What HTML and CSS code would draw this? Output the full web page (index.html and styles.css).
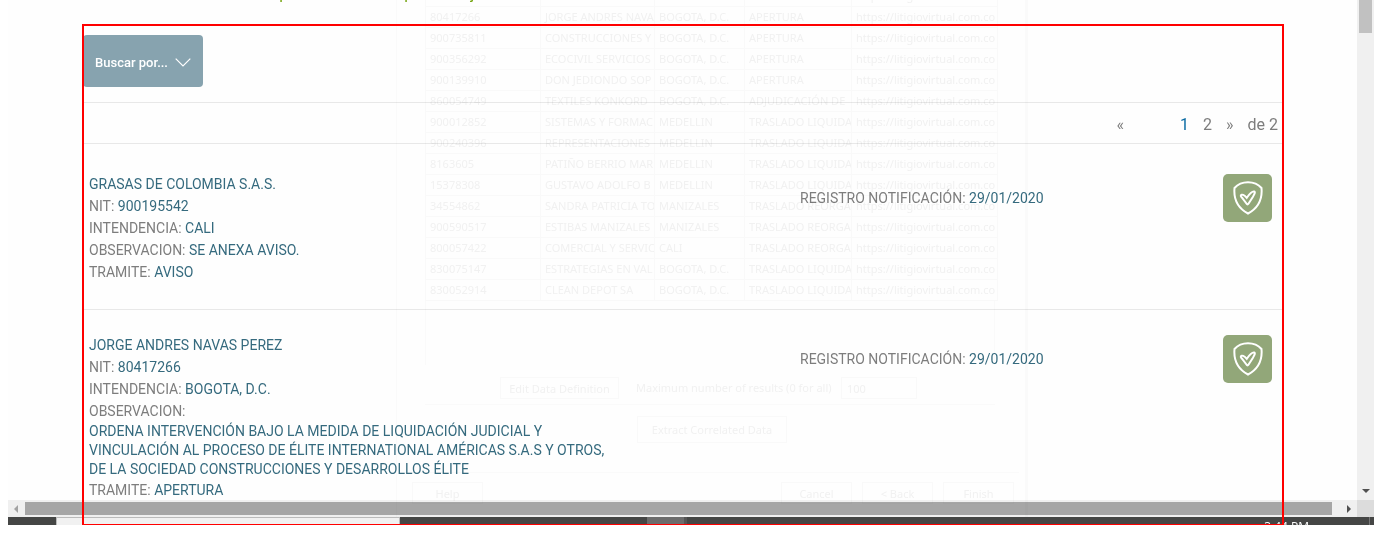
FILE: index.html
```
<!DOCTYPE html>
<html lang="es">
<head>
<meta charset="utf-8">
<title>Litigio Virtual</title>
<link rel="stylesheet" href="styles.css">
</head>
<body>
<div class="screen">
  <div class="view">
    <main class="page">
      <h1 class="heading">Consulte los procesos activos por cada juez</h1>
      <section class="results">
        <div class="search"><button class="search-btn" type="button">Buscar por...
          <svg width="16" height="9" viewBox="0 0 16 9"><path d="M.7.7 8 8 15.3.7" fill="none" stroke="#fff" stroke-width="1.2"/></svg></button></div>
        <nav class="pager"><a class="prev" href="#">«</a><a class="current" href="#">1</a><a href="#">2</a><a class="next" href="#">»</a><span>de 2</span></nav>
        <article class="item">
          <div class="info">
            <p><b>GRASAS DE COLOMBIA S.A.S.</b></p>
            <p>NIT: <b>900195542</b></p>
            <p>INTENDENCIA: <b>CALI</b></p>
            <p>OBSERVACION: <b>SE ANEXA AVISO.</b></p>
            <p>TRAMITE: <b>AVISO</b></p>
          </div>
          <p class="date">REGISTRO NOTIFICACIÓN: <b>29/01/2020</b></p>
          <button class="shield" type="button" aria-label="Verificar"><svg width="30" height="34" viewBox="0 0 30 34"><path d="M15 1.2C11 1.2 5 3 1.5 7C.5 18 5 27 15 32.5C25 27 29.5 18 28.5 7C25 3 19 1.2 15 1.2Z"/><path d="M7.8 14.6C8.5 12.6 11.5 14 13.8 16.8C16 13.5 19 10 21.2 10.500C22.700 11 21.200 13.500 19.800 16L15.600 22.500C14.800 23.800 14.200 23.800 13.400 22.500L8.800 16.500C8.200 15.800 7.600 15.200 7.800 14.600Z"/></svg></button>
        </article>
        <article class="item">
          <div class="info">
            <p><b>JORGE ANDRES NAVAS PEREZ</b></p>
            <p>NIT: <b>80417266</b></p>
            <p>INTENDENCIA: <b>BOGOTA, D.C.</b></p>
            <p>OBSERVACION:</p>
            <p class="long"><b>ORDENA INTERVENCIÓN BAJO LA MEDIDA DE LIQUIDACIÓN JUDICIAL Y<br>VINCULACIÓN AL PROCESO DE ÉLITE INTERNATIONAL AMÉRICAS S.A.S Y OTROS,<br>DE LA SOCIEDAD CONSTRUCCIONES Y DESARROLLOS ÉLITE</b></p>
            <p>TRAMITE: <b>APERTURA</b></p>
          </div>
          <p class="date">REGISTRO NOTIFICACIÓN: <b>29/01/2020</b></p>
          <button class="shield" type="button" aria-label="Verificar"><svg width="30" height="34" viewBox="0 0 30 34"><path d="M15 1.2C11 1.2 5 3 1.5 7C.5 18 5 27 15 32.5C25 27 29.5 18 28.5 7C25 3 19 1.2 15 1.2Z"/><path d="M7.8 14.6C8.5 12.6 11.5 14 13.8 16.8C16 13.5 19 10 21.2 10.500C22.700 11 21.200 13.500 19.800 16L15.600 22.500C14.800 23.800 14.200 23.800 13.400 22.500L8.800 16.500C8.200 15.800 7.600 15.200 7.800 14.600Z"/></svg></button>
        </article>
      </section>
    </main>
    <div class="vbar"><div class="vthumb"></div><svg width="8" height="4" viewBox="0 0 8 4"><path d="M0 0H8L4 4Z" fill="#505050"/></svg></div>
  </div>
  <div class="hbar"><svg width="4" height="8" viewBox="0 0 4 8"><path d="M4 0V8L0 4Z" fill="#a3a3a3"/></svg><div class="hthumb"></div><svg width="4" height="8" viewBox="0 0 4 8"><path d="M0 0V8L4 4Z" fill="#505050"/></svg><div class="corner"></div></div>
  <div class="taskbar"><div class="start"></div><div class="searchbox"></div><div class="apps"></div><div class="active"></div><div class="clock">3:44 PM</div><div class="peek"></div></div>

  <div class="ghost">
    <table>
      <colgroup><col class="c1"><col class="c2"><col class="c3"><col class="c4"><col class="c5"></colgroup>
      <tr><td>900195542</td><td>GRASAS DE COLOMBIA</td><td>CALI</td><td>AVISO</td><td>https://litigiovirtual.com.co</td></tr>
      <tr><td>80417266</td><td>JORGE ANDRES NAVAS</td><td>BOGOTA, D.C.</td><td>APERTURA</td><td>https://litigiovirtual.com.co</td></tr>
      <tr><td>900735811</td><td>CONSTRUCCIONES Y</td><td>BOGOTA, D.C.</td><td>APERTURA</td><td>https://litigiovirtual.com.co</td></tr>
      <tr><td>900356292</td><td>ECOCIVIL SERVICIOS</td><td>BOGOTA, D.C.</td><td>APERTURA</td><td>https://litigiovirtual.com.co</td></tr>
      <tr><td>900139910</td><td>DON JEDIONDO SOP</td><td>BOGOTA, D.C.</td><td>APERTURA</td><td>https://litigiovirtual.com.co</td></tr>
      <tr><td>860054749</td><td>TEXTILES KONKORD</td><td>BOGOTA, D.C.</td><td>ADJUDICACIÓN DE</td><td>https://litigiovirtual.com.co</td></tr>
      <tr><td>900012852</td><td>SISTEMAS Y FORMAC</td><td>MEDELLIN</td><td>TRASLADO LIQUIDA</td><td>https://litigiovirtual.com.co</td></tr>
      <tr><td>900240396</td><td>REPRESENTACIONES</td><td>MEDELLIN</td><td>TRASLADO LIQUIDA</td><td>https://litigiovirtual.com.co</td></tr>
      <tr><td>8163605</td><td>PATIÑO BERRIO MAR</td><td>MEDELLIN</td><td>TRASLADO LIQUIDA</td><td>https://litigiovirtual.com.co</td></tr>
      <tr><td>15378308</td><td>GUSTAVO ADOLFO B</td><td>MEDELLIN</td><td>TRASLADO LIQUIDA</td><td>https://litigiovirtual.com.co</td></tr>
      <tr><td>34554862</td><td>SANDRA PATRICIA TO</td><td>MANIZALES</td><td>TRASLADO REORGA</td><td>https://litigiovirtual.com.co</td></tr>
      <tr><td>900590517</td><td>ESTIBAS MANIZALES</td><td>MANIZALES</td><td>TRASLADO REORGA</td><td>https://litigiovirtual.com.co</td></tr>
      <tr><td>800057422</td><td>COMERCIAL Y SERVIC</td><td>CALI</td><td>TRASLADO REORGA</td><td>https://litigiovirtual.com.co</td></tr>
      <tr><td>830075147</td><td>ESTRATEGIAS EN VAL</td><td>BOGOTA, D.C.</td><td>TRASLADO LIQUIDA</td><td>https://litigiovirtual.com.co</td></tr>
      <tr><td>830052914</td><td>CLEAN DEPOT SA</td><td>BOGOTA, D.C.</td><td>TRASLADO LIQUIDA</td><td>https://litigiovirtual.com.co</td></tr>
    </table>
    <div class="g-blank"></div>
    <div class="g-edit"><button type="button">Edit Data Definition</button><label for="max">Maximum number of results (0 for all)</label><input id="max" type="text" value="100"></div>
    <div class="g-extract"><button type="button">Extract Correlated Data</button></div>
    <div class="g-foot"><button class="help" type="button">Help</button><button type="button">Cancel</button><button type="button">&lt; Back</button><button type="button">Finish</button></div>
  </div>
  <div class="marker"></div>
</div>
</body>
</html>
```
FILE: styles.css
```
* { box-sizing: border-box; }
body { margin: 0 8px; background: #fff; font-family: Roboto, "Liberation Sans", sans-serif; overflow: hidden; }
p, h1 { margin: 0; }
button { font-family: inherit; cursor: pointer; }
a { text-decoration: none; color: inherit; }
.screen { position: relative; height: 525px; display: flex; flex-direction: column; overflow: hidden; background: #fefefe; }

.view { flex: 1; min-height: 0; display: flex; }
.page { flex: 1; padding: 0 75px; overflow: hidden; }
.heading { height: 26px; margin: -16px 0 0 104px; font-size: 16px; line-height: 20px; font-weight: 400; color: #76a512; }
.results { color: #7d7d7d; font-size: 14px; padding-top: 25px; }
.search { padding-bottom: 15px; border-bottom: 1px solid #e8e8e8; }
.search-btn { display: flex; align-items: center; gap: 7px; width: 120px; height: 52px; padding: 3px 0 0 12px; border: 0; border-radius: 4px; background: #87a3af; color: #fff; font-size: 13px; font-weight: 500; }
.pager { display: flex; justify-content: flex-end; align-items: center; height: 41px; padding: 2px 4px 0 0; border-bottom: 1px solid #e8e8e8; font-size: 16px; }
.pager a { margin-right: 14px; }
.pager .prev { margin-right: 56px; }
.pager .current { color: #0b6ba3; }
.item { display: grid; grid-template-columns: 711px 1fr 49px; align-items: start; padding: 30px 10px 26px 6px; border-bottom: 1px solid #e8e8e8; }
.item + .item { padding-top: 25px; }
.info p { line-height: 22px; white-space: nowrap; }
.info { margin-top: -1px; }
.info .long { line-height: 19px; }
.item b { font-weight: 400; color: #356a7e; }
.date { line-height: 48px; }
.shield { display: grid; place-items: center; width: 49px; height: 48px; padding: 0; border: 0; border-radius: 5px; background: #92a779; }
.shield path { fill: none; stroke: #fff; stroke-width: 2; }

.vbar { width: 17px; background: #f0f0f0; display: flex; flex-direction: column; justify-content: space-between; align-items: center; padding-bottom: 7px; }
.vthumb { width: 13px; height: 33px; background: #c1c1c1; }
.hbar { height: 17px; background: #f0f0f0; display: flex; align-items: center; padding-left: 6px; }
.hthumb { flex: 1; height: 13px; margin: 0 15px 0 7px; background: #a6a6a6; }
.corner { width: 17px; height: 17px; margin-left: 6px; background: #dcdcdc; }
.taskbar { height: 8px; display: flex; background: #454645; overflow: hidden; }
.start { width: 48px; }
.searchbox { width: 344px; background: #f1f1f1; border: 1px solid #bbb; border-bottom: 0; }
.apps { width: 247px; }
.active { width: 40px; background: #6c6c6c; border-right: 3px solid #555; }
.clock { margin: 4px 60px 0 auto; color: #fff; font-size: 12px; line-height: 12px; font-family: "Open Sans", sans-serif; }
.peek { width: 5px; border-left: 1px solid #777; }

/* faded dialog window over the page */
.ghost { position: absolute; left: 388px; top: -15px; width: 632px; height: 532px; padding: 0 30px 0 28px; border: solid #fbfbfb; border-width: 0 3px 0 1px; color: #f2f2f2; font: 11px "Noto Sans", sans-serif; mix-blend-mode: multiply; }
.ghost table { width: 572px; table-layout: fixed; border-collapse: collapse; }
.c1 { width: 115px; } .c2 { width: 114px; } .c3 { width: 90px; } .c4 { width: 107px; } .c5 { width: 146px; }
.ghost td { height: 21px; padding: 0 4px; border: 1px solid #fafafa; line-height: 20px; white-space: nowrap; overflow: hidden; }
.ghost button, .ghost input { background: transparent; border: 1px solid #fafafa; color: inherit; font: inherit; padding: 0; }
.g-blank { height: 64px; border: solid #fbfbfb; border-width: 0 1px; }
.g-edit { display: flex; align-items: flex-end; height: 40px; padding: 0 0 5px 75px; border-bottom: 1px solid #fbfbfb; white-space: nowrap; }
.g-edit button { width: 119px; height: 22px; }
.g-edit label { width: 222px; padding-left: 17px; line-height: 22px; }
.g-edit input { width: 76px; height: 22px; padding-left: 5px; }
.g-extract { display: flex; justify-content: center; height: 68px; padding-top: 11px; margin: 0 -24px 0 -20px; border-bottom: 1px solid #fbfbfb; }
.g-extract button { width: 150px; height: 27px; }
.g-foot { display: flex; gap: 10px; margin: 9px -19px 0 -13px; }
.g-foot button { width: 71px; height: 22px; }
.g-foot .help { margin-right: auto; }
.marker { position: absolute; left: 74px; right: 90px; top: 24px; bottom: 0; border: 2px solid #f00; border-bottom-width: 1px; pointer-events: none; }
```
